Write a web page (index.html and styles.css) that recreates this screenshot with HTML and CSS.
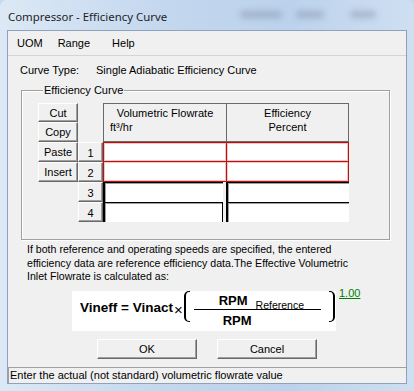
FILE: index.html
```html
<!DOCTYPE html>
<html lang="en">
<head>
<meta charset="UTF-8" />
<title>Compressor - Efficiency Curve</title>
<link rel="stylesheet" href="styles.css">
</head>
<body>

<div class="window">
  <div class="titlebar">
    <span class="caption">Compressor - Efficiency Curve</span>
    <span class="ghost g1"></span>
    <span class="ghost g2"></span>
    <span class="ghost g3"></span>
  </div>

  <div class="client">
    <div class="menubar">
      <span class="menu uom">UOM</span>
      <span class="menu range">Range</span>
      <span class="menu">Help</span>
    </div>

    <div class="curve-type">
      <span class="lbl">Curve Type:</span>
      <span>Single Adiabatic Efficiency Curve</span>
    </div>

    <fieldset class="group">
      <legend>Efficiency Curve</legend>
      <div class="grid">
        <button class="tool r1">Cut</button>
        <button class="tool r2">Copy</button>
        <button class="tool r3">Paste</button>
        <button class="tool r4">Insert</button>

        <div class="head col-a">
          <div class="center">Volumetric Flowrate</div>
          <div class="unit">ft³/hr</div>
        </div>
        <div class="head col-b">
          <div class="center">Efficiency</div>
          <div class="center">Percent</div>
        </div>

        <div class="rownum r3">1</div>
        <div class="cell req ca r3"></div>
        <div class="cell req cb r3"></div>

        <div class="rownum r4">2</div>
        <div class="cell req ca r4"></div>
        <div class="cell req cb r4"></div>

        <div class="rownum r5">3</div>
        <div class="cell blank ca r5"></div>
        <div class="cell blank cb r5"></div>

        <div class="rownum r6">4</div>
        <div class="cell blank ca r6 caret"></div>
        <div class="cell blank cb r6"></div>
      </div>
    </fieldset>

    <p class="note">If both reference and operating speeds are specified, the entered efficiency data are reference efficiency data.The Effective Volumetric Inlet Flowrate is calculated as:</p>

    <div class="formula-row">
      <div class="formula">
        <span class="lhs">Vineff = Vinact</span>
        <span class="times">×</span>
        <span class="paren left"></span>
        <div class="frac">
          <div class="num"><b>RPM</b><span class="sub">Reference</span></div>
          <div class="den"><b>RPM</b></div>
        </div>
        <span class="paren right"></span>
      </div>
      <a class="factor" href="#">1.00</a>
    </div>

    <div class="actions">
      <button class="btn">OK</button>
      <button class="btn">Cancel</button>
    </div>

    <div class="status">Enter the actual (not standard) volumetric flowrate value</div>
  </div>
</div>

</body>
</html>
```

FILE: styles.css
```css
body {
  margin: 0;
  background: #c7d9ef;
  font-family: 'Liberation Sans', Arial, sans-serif;
  font-size: 11px;
  color: #000;
}
.window {
  width: 414px;
  height: 391px;
  box-sizing: border-box;
  display: flex;
  flex-direction: column;
  background: linear-gradient(to right, #dce8f5 0%, #c3d7ee 40%, #bcd2ec 70%, #cfdff2 100%);
  border-radius: 7px 7px 0 0;
  overflow: hidden;
}
.titlebar {
  height: 30px;
  display: flex;
  align-items: center;
  padding-left: 8px;
  position: relative;
}
.caption {
  font-family: 'Noto Sans', sans-serif;
  font-size: 11.4px;
  color: #1e1e1e;
  margin-top: 2px;
}
/* blurred captions of the window behind the glass */
.ghost {
  position: absolute;
  top: 11px;
  height: 7px;
  background: rgba(90, 100, 120, 0.3);
  filter: blur(3px);
  border-radius: 3px;
}
.g1 { left: 240px; width: 42px; }
.g2 { left: 296px; width: 28px; }
.g3 { left: 350px; width: 26px; }

.client {
  flex: 1;
  margin: 0 7px 7px 7px;
  border: 1px solid #8ea2bc;
  background: #f0f0f0;
  display: flex;
  flex-direction: column;
}
.menubar {
  height: 24px;
  border-bottom: 1px solid #d4d4d4;
  display: flex;
  align-items: center;
  padding-left: 9px;
}
.menu.uom { margin-right: 15px; }
.menu.range { margin-right: 22px; }

.curve-type {
  padding: 8px 0 0 12px;
  line-height: 13px;
  display: flex;
}
.curve-type .lbl {
  width: 76px;
}

.group {
  margin: 7px 16px 0 13px;
  padding: 0 0 17px 16px;
  border: 1px solid #a0a0a0;
  box-shadow: inset 1px 1px #fff, 1px 1px #fff;
  min-width: 0;
}
.group legend {
  padding: 0 1px;
  margin-left: 5px;
  line-height: 13px;
  background: #f0f0f0;
}
.grid {
  margin-top: 6px;
  display: grid;
  grid-template-columns: 40px 25px 123px 123px;
  grid-template-rows: 19px 20px 20px 20px 20px 20px;
}
.r1 { grid-row: 1; }
.r2 { grid-row: 2; }
.r3 { grid-row: 3; }
.r4 { grid-row: 4; }
.r5 { grid-row: 5; }
.r6 { grid-row: 6; }
.ca { grid-column: 3; }
.cb { grid-column: 4; }

.tool, .rownum, .btn {
  font-family: 'Liberation Sans', Arial, sans-serif;
  font-size: 11px;
  color: #000;
  background: #f0f0f0;
  border: 1px solid;
  border-color: #fff #696969 #696969 #fff;
  box-shadow: inset -1px -1px #a0a0a0;
  padding: 0;
  margin: 0;
  box-sizing: border-box;
}
.tool { grid-column: 1; }
.rownum {
  grid-column: 2;
  display: flex;
  align-items: center;
  justify-content: center;
  padding-top: 1px;
}
.head {
  grid-row: 1 / span 2;
  border: 1px solid #696969;
  padding-top: 2px;
  line-height: 14px;
  box-sizing: border-box;
}
.head.col-a { grid-column: 3; border-right: none; }
.head.col-b { grid-column: 4; }
.center { text-align: center; }
.unit { padding-left: 6px; }

.cell {
  box-sizing: border-box;
  background: #fff;
}
.cell.req {
  border: 1px solid #bb1111;
  box-shadow: inset 0 0 0 1px #f3c4c4;
}
.cell.req.ca { border-right: none; }
.cell.req.r4 { border-top: none; }
.cell.blank {
  border-top: 1px solid #000;
  border-left: 2px solid #000;
  box-shadow: inset 1px 1px #a0a0a0;
}
.cell.blank.ca { margin-right: 3px; }
.cell.caret { border-right: 1px solid #000; }

.note {
  margin: 3px 0 0 19px;
  width: 332px;
  font-size: 10.6px;
  line-height: 13.5px;
}

.formula-row {
  margin: 7px 0 0 64px;
  display: flex;
  align-items: flex-start;
}
.formula {
  width: 264px;
  height: 40px;
  background: #fff;
  box-sizing: border-box;
  padding-left: 8px;
  display: flex;
  align-items: center;
}
.lhs {
  font-weight: bold;
  font-size: 13.5px;
  margin-top: -6px;
}
.times {
  font-size: 15px;
  margin: -3px 1px 0 1px;
}
.paren {
  width: 4px;
  height: 29px;
  border: 0 solid #000;
  border-top-width: 1px;
  border-bottom-width: 1px;
  margin-top: -9px;
}
.paren.left {
  border-left-width: 2px;
  border-radius: 5px 0 0 5px;
}
.paren.right {
  border-right-width: 2px;
  border-radius: 0 5px 5px 0;
  margin-left: 8px;
}
.frac {
  width: 127px;
  margin-left: 4px;
}
.num {
  border-bottom: 1px solid #000;
  padding: 0 0 1px 25px;
  line-height: 14px;
}
.num b, .den b {
  font-size: 13px;
}
.sub {
  font-size: 10.5px;
  margin-left: 8px;
  position: relative;
  top: 4px;
}
.den {
  padding-left: 29px;
  line-height: 14px;
  margin-top: 4px;
}
.factor {
  color: #008000;
  margin: -4px 0 0 3px;
}

.actions {
  margin-top: 8px;
  display: flex;
  justify-content: center;
  gap: 20px;
}
.btn {
  width: 100px;
  height: 20px;
}

.status {
  margin-top: auto;
  height: 16px;
  box-sizing: border-box;
  border-top: 1px solid #a0a0a0;
  border-left: 1px solid #a0a0a0;
  padding-left: 1px;
  line-height: 15px;
}
```
